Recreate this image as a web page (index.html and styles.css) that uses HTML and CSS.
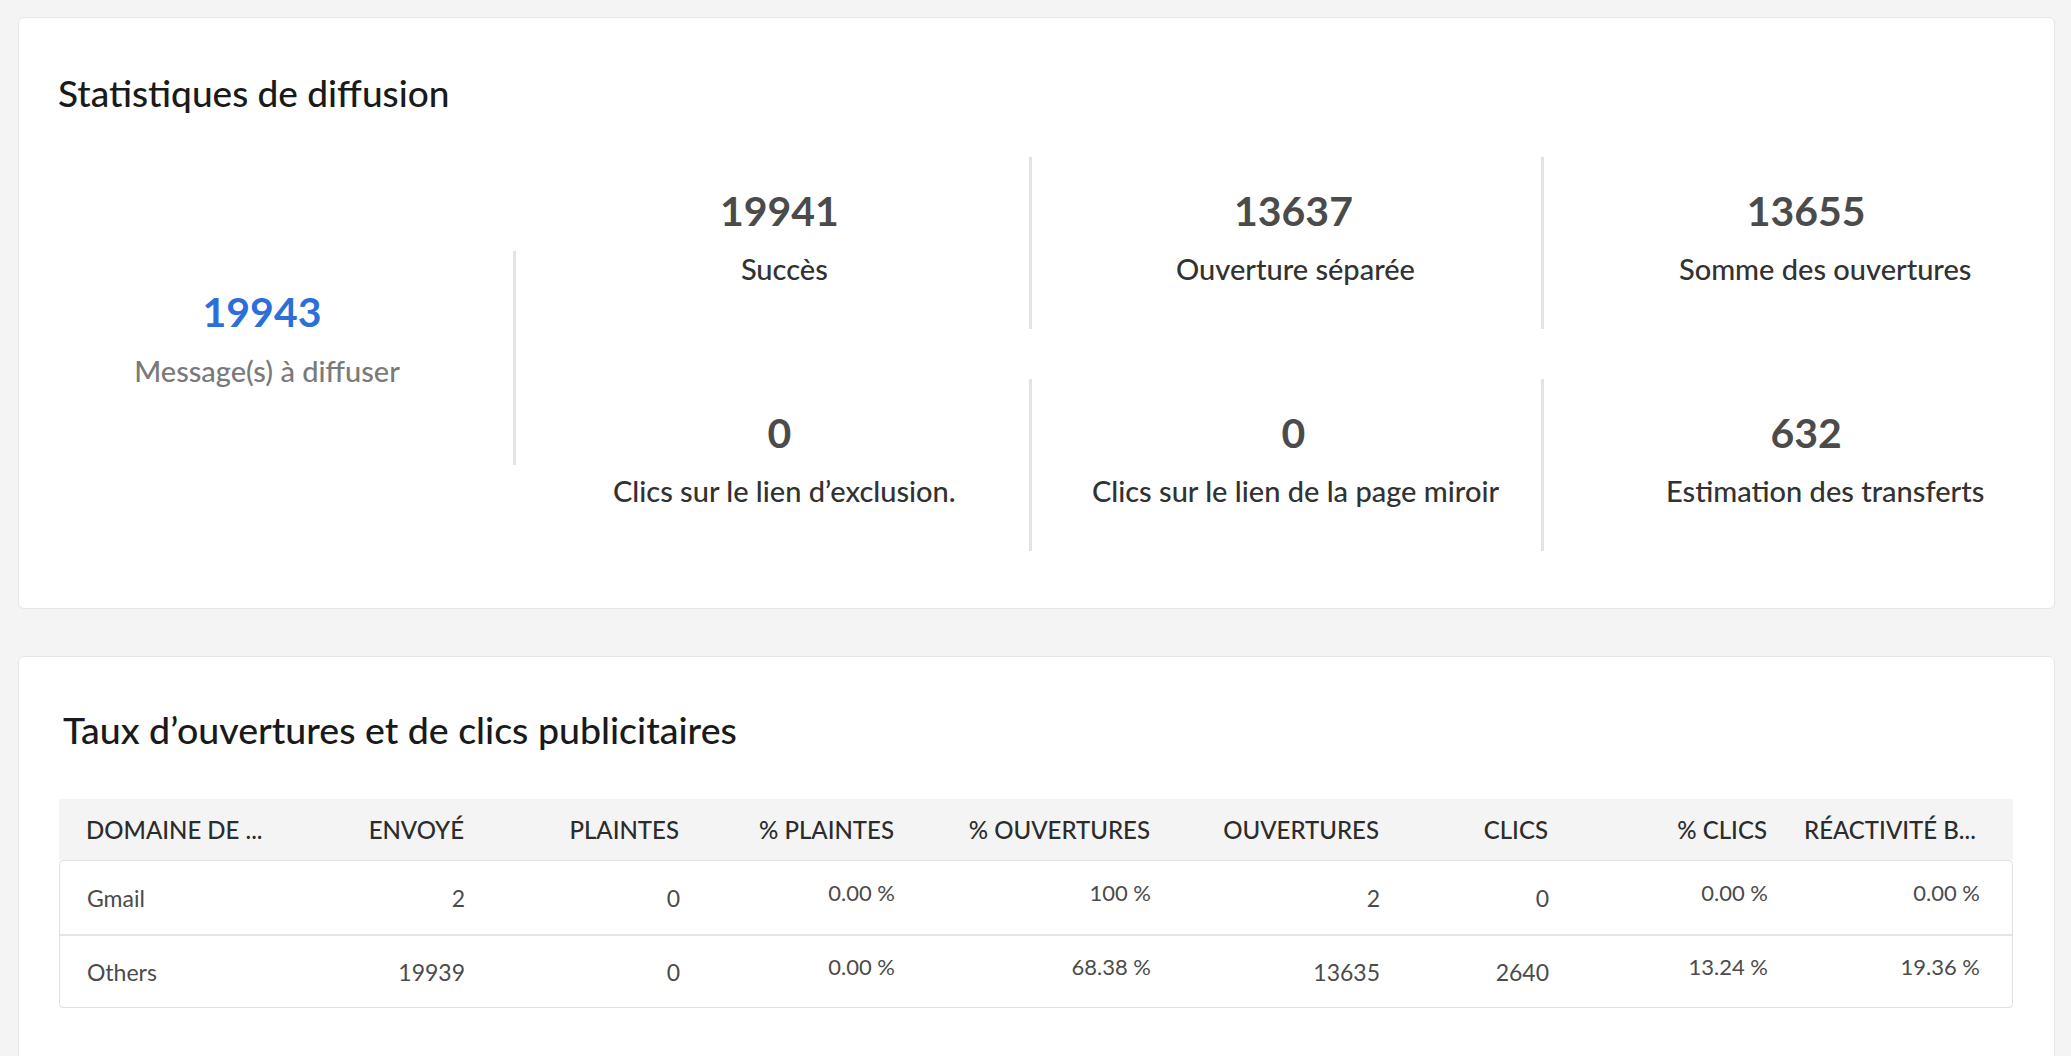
FILE: index.html
```html
<!DOCTYPE html>
<html lang="fr">
<head>
<meta charset="utf-8">
<title>Statistiques de diffusion</title>
<link rel="stylesheet" href="styles.css">
</head>
<body>
<main class="page">
  <section class="card card-stats">
    <h2 class="card-title">Statistiques de diffusion</h2>
    <div class="stats">
      <div class="stat-main-wrap">
        <div class="stat stat-main">
          <div class="stat-value stat-value-blue">19943</div>
          <div class="stat-label stat-label-muted">Message(s) à diffuser</div>
        </div>
      </div>
      <div class="stat-grid">
        <div class="stat stat-col1">
          <div class="stat-value">19941</div>
          <div class="stat-label">Succès</div>
        </div>
        <div class="stat stat-sep stat-col2">
          <div class="stat-value">13637</div>
          <div class="stat-label">Ouverture séparée</div>
        </div>
        <div class="stat stat-sep stat-col3">
          <div class="stat-value">13655</div>
          <div class="stat-label">Somme des ouvertures</div>
        </div>
        <div class="stat stat-col1">
          <div class="stat-value">0</div>
          <div class="stat-label">Clics sur le lien d’exclusion.</div>
        </div>
        <div class="stat stat-sep stat-col2">
          <div class="stat-value">0</div>
          <div class="stat-label">Clics sur le lien de la page miroir</div>
        </div>
        <div class="stat stat-sep stat-col3">
          <div class="stat-value">632</div>
          <div class="stat-label">Estimation des transferts</div>
        </div>
      </div>
    </div>
  </section>

  <section class="card card-table">
    <h2 class="card-title card-title-table">Taux d’ouvertures et de clics publicitaires</h2>
    <div class="table">
      <div class="row thead">
        <div class="cell cell-first">DOMAINE DE ...</div>
        <div class="cell">ENVOYÉ</div>
        <div class="cell">PLAINTES</div>
        <div class="cell">% PLAINTES</div>
        <div class="cell">% OUVERTURES</div>
        <div class="cell">OUVERTURES</div>
        <div class="cell">CLICS</div>
        <div class="cell">% CLICS</div>
        <div class="cell cell-last cell-left">RÉACTIVITÉ B...</div>
      </div>
      <div class="tbody">
        <div class="row trow">
          <div class="cell cell-first">Gmail</div>
          <div class="cell">2</div>
          <div class="cell">0</div>
          <div class="cell cell-pct">0.00 %</div>
          <div class="cell cell-pct">100 %</div>
          <div class="cell">2</div>
          <div class="cell">0</div>
          <div class="cell cell-pct">0.00 %</div>
          <div class="cell cell-pct cell-last">0.00 %</div>
        </div>
        <div class="row trow">
          <div class="cell cell-first">Others</div>
          <div class="cell">19939</div>
          <div class="cell">0</div>
          <div class="cell cell-pct">0.00 %</div>
          <div class="cell cell-pct">68.38 %</div>
          <div class="cell">13635</div>
          <div class="cell">2640</div>
          <div class="cell cell-pct">13.24 %</div>
          <div class="cell cell-pct cell-last">19.36 %</div>
        </div>
      </div>
    </div>
  </section>
</main>
</body>
</html>
```

FILE: styles.css
```css
* { box-sizing: border-box; }

html, body {
  margin: 0;
  background: #f4f4f4;
  font-family: Lato, "Open Sans", "Noto Sans", sans-serif;
  color: #2c2c2c;
}

.page {
  padding: 17px 16px 0 18px;
  display: flex;
  flex-direction: column;
  gap: 47px;
}

.card {
  background: #ffffff;
  border: 1px solid #e6e6e6;
  border-radius: 6px;
}

.card-title {
  margin: 0;
  padding: 53px 0 0 39px;
  font-size: 37px;
  line-height: 44px;
  font-weight: 500;
  color: #1a1a1a;
}

/* ---------- stats card ---------- */
.card-stats {
  padding-bottom: 57px;
}

.stats {
  margin-top: 42px;
  display: grid;
  grid-template-columns: 497px 1fr;
}

.stat-main-wrap {
  display: flex;
  align-items: center;
  padding-top: 8px;
}

.stat-grid {
  display: grid;
  grid-template-columns: 1fr 1fr 1fr;
  grid-template-rows: 172px 172px;
  row-gap: 50px;
}

.stat {
  display: flex;
  flex-direction: column;
  align-items: center;
  padding-top: 30px;
}

.stat-main {
  width: 100%;
  height: 214px;
  border-right: 3px solid #e3e3e3;
  padding-top: 37px;
}

.stat-sep {
  border-left: 3px solid #e3e3e3;
}

.stat-value {
  font-size: 41px;
  line-height: 48px;
  font-weight: 700;
  color: #4b4b4b;
  padding-left: 14px;
}

.stat-value-blue {
  color: #2d6fd9;
  padding-left: 0;
  padding-right: 8px;
}

.stat-label {
  margin-top: 15px;
  font-size: 29px;
  line-height: 38px;
  font-weight: 500;
  color: #323232;
}

.stat-col1 .stat-label { padding-left: 24px; }
.stat-col2 .stat-label { padding-left: 18px; }
.stat-col3 .stat-label { padding-left: 52px; }

.stat-label-muted {
  color: #7a7a7a;
  padding-left: 2px;
  margin-top: 16px;
}

/* ---------- table card ---------- */
.card-table {
  padding-bottom: 80px;
}

.card-title-table {
  padding: 51px 0 0 44px;
  font-size: 37.5px;
}

.table {
  margin: 47px 41px 0 40px;
}

.row {
  display: grid;
  grid-template-columns: 220px 201px 215px 215px 256px 229px 169px 219px 1fr;
}

.thead {
  height: 61px;
  background: #f4f4f4;
  align-items: center;
  font-size: 24px;
  font-weight: 500;
  color: #2c2c2c;
}

.tbody {
  border: 1px solid #e1e1e1;
  border-radius: 4px;
}

.trow {
  height: 73px;
  align-items: center;
  font-size: 23px;
  color: #4b4b4b;
}

.trow + .trow {
  border-top: 2px solid #e5e5e5;
}

.cell {
  padding: 0 16px;
  text-align: right;
  white-space: nowrap;
  overflow: hidden;
}

.cell-first {
  text-align: left;
  padding-left: 27px;
}

.cell-last {
  padding-right: 32px;
}

.cell-left {
  text-align: left;
  padding-left: 21px;
}

.cell-pct {
  font-size: 22px;
  padding-bottom: 10px;
}
```
